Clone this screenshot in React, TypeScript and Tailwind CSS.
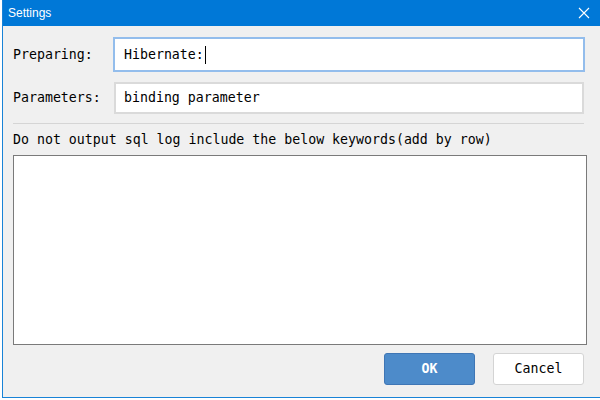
import React from "react";

const mono = { fontFamily: '"DejaVu Sans Mono", "Liberation Mono", monospace' };

export default function App() {
  return (
    <div className="w-[600px] h-[400px] bg-white overflow-hidden">
      <div className="ml-[2px] w-[598px] h-[398px] border-l border-b border-[#1883d7] bg-[#f0f0f0] flex flex-col">
        <div
          className="h-[26px] bg-[#0078d7] flex items-center justify-between pl-[5px] pr-[10px] text-white text-[12px] shrink-0"
          style={{ fontFamily: '"Liberation Sans", Arial, sans-serif' }}
        >
          <span>Settings</span>
          <svg width="12" height="12" viewBox="0 0 12 12" className="mr-[0px]">
            <path d="M1 1 L11 11 M11 1 L1 11" stroke="white" strokeWidth="1.1" fill="none" />
          </svg>
        </div>
        <div className="flex flex-col pl-[10px] text-[13.25px] text-black" style={mono}>
          <div className="flex items-center mt-[11px]">
            <span className="w-[100px]">Preparing:</span>
            <div className="w-[472px] h-[35px] border-2 border-[#93bdec] bg-white flex items-center pl-[9px]">
              <span>Hibernate:</span>
              <span className="w-px h-[18px] bg-black ml-[1px]" />
            </div>
          </div>
          <div className="flex items-center mt-[10px]">
            <span className="w-[101px]">Parameters:</span>
            <div className="w-[470px] h-[32px] border-2 border-[#dadada] bg-white flex items-center pl-[8px]">
              <span>binding parameter</span>
            </div>
          </div>
          <div className="mt-[9px] w-[571px] h-px bg-[#d5d5d5]" />
          <div className="mt-[8px] leading-[16px]">Do not output sql log include the below keywords(add by row)</div>
          <div className="mt-[7px] w-[574px] h-[190px] border border-[#7a7a7a] bg-white" />
          <div className="flex mt-[8px] ml-[371px] gap-[18px]">
            <button className="w-[91px] h-[32px] rounded-[3px] bg-[#4d8bca] border border-[#3f76b5] text-white font-bold">
              OK
            </button>
            <button className="w-[91px] h-[32px] rounded-[3px] bg-white border border-[#d4d4d4] text-black">
              Cancel
            </button>
          </div>
        </div>
      </div>
    </div>
  );
}
